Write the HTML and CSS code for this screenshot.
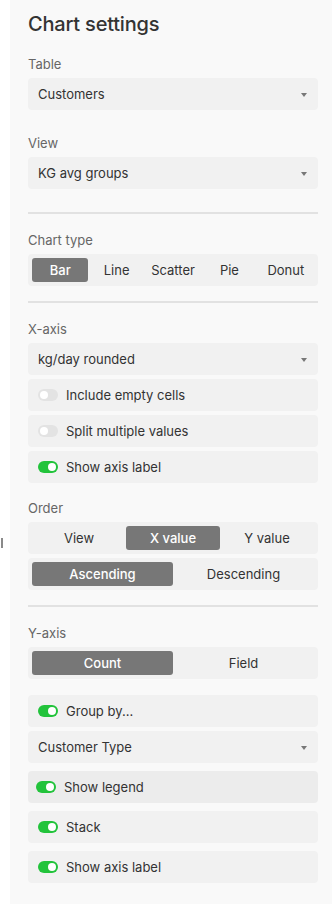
FILE: index.html
```html
<!DOCTYPE html>
<html lang="en">
<head>
<meta charset="utf-8">
<title>Chart settings</title>
<link rel="stylesheet" href="styles.css">
</head>
<body>
<div class="page">
  <div class="gutter"><span class="caret"></span></div>
  <aside class="panel">
    <h1 class="title">Chart settings</h1>

    <div class="label first">Table</div>
    <div class="select"><span>Customers</span><span class="arrow"></span></div>

    <div class="label sp25">View</div>
    <div class="select"><span>KG avg groups</span><span class="arrow"></span></div>

    <hr class="divider d23">

    <div class="label">Chart type</div>
    <div class="seg">
      <button class="seg-btn active">Bar</button>
      <button class="seg-btn">Line</button>
      <button class="seg-btn">Scatter</button>
      <button class="seg-btn">Pie</button>
      <button class="seg-btn">Donut</button>
    </div>

    <hr class="divider">

    <div class="label">X-axis</div>
    <div class="select"><span>kg/day rounded</span><span class="arrow"></span></div>
    <div class="row g4"><span class="toggle"></span><span>Include empty cells</span></div>
    <div class="row g4"><span class="toggle"></span><span>Split multiple values</span></div>
    <div class="row g4"><span class="toggle on"></span><span>Show axis label</span></div>

    <div class="label sp17">Order</div>
    <div class="seg">
      <button class="seg-btn">View</button>
      <button class="seg-btn active">X value</button>
      <button class="seg-btn">Y value</button>
    </div>
    <div class="seg g4">
      <button class="seg-btn active">Ascending</button>
      <button class="seg-btn">Descending</button>
    </div>

    <hr class="divider">

    <div class="label">Y-axis</div>
    <div class="seg">
      <button class="seg-btn active">Count</button>
      <button class="seg-btn">Field</button>
    </div>
    <div class="row g16"><span class="toggle on"></span><span>Group by...</span></div>
    <div class="select g4"><span>Customer Type</span><span class="arrow"></span></div>
    <div class="row g8 hover"><span class="toggle on"></span><span>Show legend</span></div>
    <div class="row g8"><span class="toggle on"></span><span>Stack</span></div>
    <div class="row g8"><span class="toggle on"></span><span>Show axis label</span></div>
  </aside>
</div>
</body>
</html>
```

FILE: styles.css
```css
* { box-sizing: border-box; }

html, body {
  margin: 0;
  padding: 0;
  background: #ffffff;
}

body {
  font-family: Inter, "Noto Sans", "Liberation Sans", sans-serif;
  color: #333333;
  font-size: 13px;
}

.page {
  display: flex;
  min-height: 904px;
}

.gutter {
  width: 10px;
  flex: none;
  position: relative;
}

.caret {
  position: absolute;
  left: 1px;
  top: 538px;
  width: 2px;
  height: 10px;
  background: #8a8a8a;
}

.panel {
  flex: 1;
  background: #f9f9f9;
  padding: 12px 14px 20px 18px;
  display: flex;
  flex-direction: column;
}

.title {
  margin: 0;
  font-size: 20px;
  line-height: 24px;
  font-weight: 500;
  color: #333333;
  letter-spacing: -0.2px;
}

.label {
  font-size: 13px;
  line-height: 16px;
  color: #666666;
  margin-top: 18px;
  margin-bottom: 6px;
}
.label.first { margin-top: 20px; }
.label.sp25 { margin-top: 25px; }
.label.sp17 { margin-top: 17px; }

.select {
  height: 32px;
  border-radius: 4px;
  background: #f1f1f1;
  display: flex;
  align-items: center;
  justify-content: space-between;
  padding: 0 11px 0 10px;
  font-size: 13px;
  color: #333333;
}

.arrow {
  width: 0;
  height: 0;
  border-left: 3px solid transparent;
  border-right: 3px solid transparent;
  border-top: 4px solid #777777;
  margin-top: 1px;
}

.divider {
  border: 0;
  height: 2px;
  background: #e2e2e2;
  margin: 15px 0 0 0;
}
.divider.d23 { margin-top: 23px; }

.seg {
  height: 32px;
  border-radius: 4px;
  background: #f1f1f1;
  display: flex;
  padding: 4px;
}

.seg-btn {
  flex: 1 1 0;
  border: 0;
  background: transparent;
  font-family: inherit;
  font-size: 13px;
  color: #333333;
  border-radius: 3px;
  padding: 0;
  height: 24px;
  line-height: 24px;
}

.seg-btn.active {
  background: #777777;
  color: #ffffff;
  font-weight: 500;
}

.row {
  height: 32px;
  border-radius: 4px;
  background: #f1f1f1;
  display: flex;
  align-items: center;
  padding-left: 10px;
  gap: 8px;
  font-size: 13px;
  color: #333333;
}

.row.hover {
  background: #ececec;
  padding-left: 8px;
}

.g4 { margin-top: 4px; }
.g8 { margin-top: 8px; }
.g16 { margin-top: 16px; }

.toggle {
  width: 20px;
  height: 12px;
  border-radius: 6px;
  background: #e3e3e3;
  position: relative;
  flex: none;
}

.toggle::after {
  content: "";
  position: absolute;
  top: 2px;
  left: 2px;
  width: 8px;
  height: 8px;
  border-radius: 50%;
  background: #ffffff;
}

.toggle.on { background: #22c33b; }
.toggle.on::after { left: 10px; }
```
